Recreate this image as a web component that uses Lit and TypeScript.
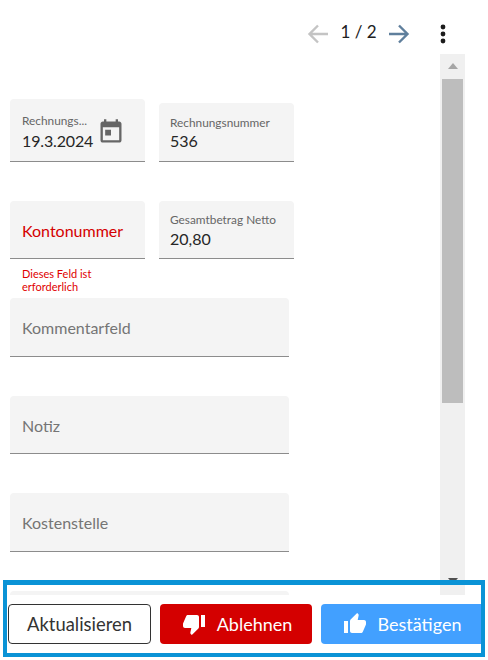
import { LitElement, html, css } from "lit";
import { customElement } from "lit/decorators.js";

@customElement("app-root")
export class AppRoot extends LitElement {
  static styles = css`
    :host { display: block; position: relative; width: 488px; height: 660px; overflow: hidden; background: #fff; font-family: Lato, "Liberation Sans", sans-serif; color: #212121; }
    .header { height: 54px; display: flex; align-items: flex-start; box-sizing: border-box; padding: 22px 0 0 307px; }
    .arrow { width: 22px; height: 22px; display: block; }
    .back { stroke: #c4c4c4; }
    .next { stroke: #5f7f9c; }
    .pager { font-size: 17px; line-height: 20px; width: 59px; text-align: center; color: #212121; }
    .more { width: 24px; height: 24px; margin-left: 21px; margin-top: 1px; display: block; fill: #1c1c1c; }
    .main { display: flex; height: 541px; }
    .form { width: 440px; height: 541px; overflow: hidden; box-sizing: border-box; padding: 45px 0 0 10px; display: flex; flex-direction: column; }
    .row { display: flex; align-items: flex-end; gap: 14px; margin-bottom: 39px; }
    .field { box-sizing: border-box; background: #f4f4f4; border-bottom: 1px solid #8c8c8c; border-radius: 4px 4px 0 0; padding: 0 12px; display: flex; flex-direction: column; justify-content: center; flex: none; }
    .small { width: 135px; height: 59px; }
    .col2 { padding-left: 11px; padding-top: 2px; }
    .col2 .label { margin-bottom: 1px; }
    .sum { padding-top: 3px; }
    .sum .label { margin-bottom: 2px; }
    .tall { height: 63px; position: relative; padding-top: 5px; }
    .wide { width: 279px; height: 59px; margin-bottom: 39px; flex: none; }
    .narrow { height: 58px; }
    .label { font-size: 11.85px; line-height: 14px; color: #666; white-space: nowrap; margin-bottom: 3px; }
    .value { font-size: 16px; line-height: 20px; color: #262626; }
    .date { letter-spacing: -0.15px; }
    .placeholder { font-size: 16px; line-height: 20px; color: #757575; padding-top: 2px; }
    .red { color: #d40000; font-size: 16px; line-height: 20px; padding-top: 2px; }
    .cal { position: absolute; left: 87px; top: 19px; width: 28px; height: 28px; fill: #666; }
    .errorcol { width: 135px; display: flex; flex-direction: column; }
    .error { color: #e00000; font-size: 11px; line-height: 13px; padding: 8px 12px 0; height: 31px; box-sizing: content-box; margin: 0; }
    .row.second { align-items: flex-start; margin-bottom: 0; height: 97px; }
    .scrollbar { width: 25px; background: #f0f0f0; display: flex; flex-direction: column; align-items: center; flex: none; box-sizing: border-box; padding-top: 9px; }
    .up { width: 0; height: 0; border-left: 5.5px solid transparent; border-right: 5.5px solid transparent; border-bottom: 6px solid #a6a6a6; }
    .thumb { width: 21px; height: 324px; background: #bdbdbd; margin-top: 10px; }
    .down { width: 0; height: 0; border-left: 5.5px solid transparent; border-right: 5.5px solid transparent; border-top: 6px solid #505050; margin-top: 175px; }
    .actions { display: flex; gap: 9px; padding: 9px 0 0 8px; }
    .btn { box-sizing: border-box; height: 40px; border: none; padding: 0; border-radius: 4px; display: flex; align-items: center; justify-content: center; gap: 11px; font-size: 18px; font-family: inherit; flex: none; }
    .btn svg { width: 24px; height: 24px; fill: currentColor; display: block; }
    .outline { width: 143px; background: #fff; border: 1px solid #333; color: #333; font-size: 18.4px; }
    .reject { width: 152px; background: #d40000; color: #fff; padding-left: 2px; }
    .confirm { width: 160px; background: #42a0ff; color: #fff; border-radius: 4px 0 0 4px; padding-left: 2px; }
    .frame { position: absolute; left: 3px; top: 580px; width: 482px; height: 77px; box-sizing: border-box; border: 4px solid #0a93d6; border-top-width: 5px; pointer-events: none; }
  `;

  render() {
    return html`
      <div class="header">
        <svg class="arrow back" viewBox="0 0 22 22" fill="none" stroke-width="2.4"><path d="M21 12H3M11 3.5l-8.5 8.5 8.5 8.5"/></svg>
        <div class="pager">1 / 2</div>
        <svg class="arrow next" viewBox="0 0 22 22" fill="none" stroke-width="2.4"><path d="M1 12h18M11 3.5l8.5 8.5-8.5 8.5"/></svg>
        <svg class="more" viewBox="0 0 24 24"><circle cx="12" cy="4" r="2.4"/><circle cx="12" cy="11" r="2.4"/><circle cx="12" cy="18" r="2.4"/></svg>
      </div>
      <div class="main">
        <div class="form">
          <div class="row">
            <div class="field small tall">
              <div class="label">Rechnungs...</div>
              <div class="value date">19.3.2024</div>
              <svg class="cal" viewBox="0 0 24 24"><path d="M19 3h-1V1h-2v2H8V1H6v2H5c-1.11 0-1.99.9-1.99 2L3 19c0 1.1.89 2 2 2h14c1.1 0 2-.9 2-2V5c0-1.1-.9-2-2-2zm0 16H5V8h14v11zM7 10h5v5H7z"/></svg>
            </div>
            <div class="field small col2">
              <div class="label">Rechnungsnummer</div>
              <div class="value">536</div>
            </div>
          </div>
          <div class="row second">
            <div class="errorcol">
              <div class="field small narrow"><div class="red">Kontonummer</div></div>
              <p class="error">Dieses Feld ist erforderlich</p>
            </div>
            <div class="field small narrow col2 sum">
              <div class="label">Gesamtbetrag Netto</div>
              <div class="value">20,80</div>
            </div>
          </div>
          <div class="field wide"><div class="placeholder">Kommentarfeld</div></div>
          <div class="field wide narrow"><div class="placeholder">Notiz</div></div>
          <div class="field wide"><div class="placeholder">Kostenstelle</div></div>
          <div class="field wide"></div>
        </div>
        <div class="scrollbar">
          <div class="up"></div>
          <div class="thumb"></div>
          <div class="down"></div>
        </div>
      </div>
      <div class="actions">
        <button class="btn outline">Aktualisieren</button>
        <button class="btn reject">
          <svg viewBox="0 0 24 24"><path d="M15 3H6c-.83 0-1.54.5-1.84 1.22l-3.02 7.05c-.09.23-.14.47-.14.73v2c0 1.1.9 2 2 2h6.31l-.95 4.57-.03.32c0 .41.17.79.44 1.06L9.83 23l6.59-6.59c.36-.36.58-.86.58-1.41V5c0-1.1-.9-2-2-2zm4 0v12h4V3h-4z"/></svg>
          Ablehnen
        </button>
        <button class="btn confirm">
          <svg viewBox="0 0 24 24"><path d="M1 21h4V9H1v12zm22-11c0-1.1-.9-2-2-2h-6.31l.95-4.57.03-.32c0-.41-.17-.79-.44-1.06L14.17 1 7.59 7.59C7.22 7.95 7 8.45 7 9v10c0 1.1.9 2 2 2h9c.83 0 1.54-.5 1.84-1.22l3.02-7.05c.09-.23.14-.47.14-.73v-2z"/></svg>
          Bestätigen
        </button>
      </div>
      <div class="frame"></div>
    `;
  }
}
